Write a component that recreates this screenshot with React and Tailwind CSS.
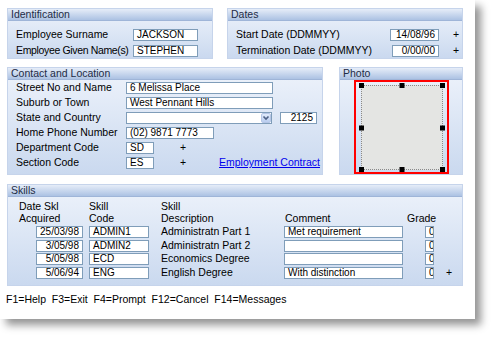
const font = "font-['Liberation_Sans',Arial,sans-serif]";

const Field = ({ className = "", children }) => (
  <div
    className={`h-[12px] shrink-0 overflow-hidden whitespace-nowrap border border-[#7f9db9] bg-white px-[3px] text-[10px] leading-[10px] text-black ${className}`}
  >
    {children}
  </div>
);

const Panel = ({ title, className = "", bodyClassName = "", children }) => (
  <div
    className={`flex flex-col border border-[#c6d4eb] bg-linear-to-b from-[#eef3fb] to-[#cad9ef] ${className}`}
  >
    <div className="h-[12px] shrink-0 border-b border-[#9fb5d8] bg-linear-to-b from-[#e6edf8] to-[#acc2e3] pl-[3px] text-[10.5px] leading-[11px] text-[#1e2c46]">
      {title}
    </div>
    <div className={bodyClassName}>{children}</div>
  </div>
);

const Handle = ({ className }) => (
  <div className={`absolute h-[5px] w-[5px] bg-black ${className}`} />
);

const skills = [
  { date: "25/03/98", code: "ADMIN1", desc: "Administratn Part 1", comment: "Met requirement" },
  { date: "3/05/98", code: "ADMIN2", desc: "Administratn Part 2", comment: "" },
  { date: "5/05/98", code: "ECD", desc: "Economics Degree", comment: "" },
  { date: "5/06/94", code: "ENG", desc: "English Degree", comment: "With distinction" },
];

export default function App() {
  return (
    <div className={`h-[347px] w-[492px] overflow-hidden bg-white text-[10.5px] text-black ${font}`}>
      <div className="h-[319px] w-[475px] bg-white pt-[8px] shadow-[6px_6px_8px_rgba(0,0,0,0.42)]">
        <div className="flex flex-col pl-[7px]">
          {/* top row */}
          <div className="flex gap-[14px]">
            <Panel
              title="Identification"
              className="h-[51px] w-[206px]"
              bodyClassName="flex flex-col gap-[4px] pl-[8px] pt-[8px]"
            >
              <div className="flex h-[12px] items-center">
                <span className="w-[117px]">Employee Surname</span>
                <Field className="w-[65px]">JACKSON</Field>
              </div>
              <div className="flex h-[12px] items-center">
                <span className="w-[117px] whitespace-nowrap tracking-[-0.35px]">Employee Given Name(s)</span>
                <Field className="w-[65px]">STEPHEN</Field>
              </div>
            </Panel>

            <Panel
              title="Dates"
              className="h-[51px] w-[236px]"
              bodyClassName="flex flex-col gap-[4px] pl-[8px] pt-[8px]"
            >
              <div className="flex h-[12px] items-center">
                <span className="w-[154px]">Start Date (DDMMYY)</span>
                <Field className="w-[49px] text-right">14/08/96</Field>
                <span className="ml-[14px]">+</span>
              </div>
              <div className="flex h-[12px] items-center">
                <span className="w-[156px] whitespace-nowrap">Termination Date (DDMMYY)</span>
                <Field className="w-[47px] text-right">0/00/00</Field>
                <span className="ml-[14px]">+</span>
              </div>
            </Panel>
          </div>

          {/* middle row */}
          <div className="mt-[8px] flex gap-[16px]">
            <Panel
              title="Contact and Location"
              className="h-[108px] w-[316px]"
              bodyClassName="flex flex-col gap-[3px] pl-[8px] pt-[2px]"
            >
              <div className="flex h-[12px] items-center">
                <span className="w-[110px]">Street No and Name</span>
                <Field className="w-[147px]">6 Melissa Place</Field>
              </div>
              <div className="flex h-[12px] items-center">
                <span className="w-[110px]">Suburb or Town</span>
                <Field className="w-[147px]">West Pennant Hills</Field>
              </div>
              <div className="flex h-[12px] items-center">
                <span className="w-[110px]">State and Country</span>
                <div className="flex h-[12px] w-[146px] items-center justify-end border border-[#7f9db9] bg-white">
                  <svg width="10" height="10" viewBox="0 0 10 10">
                    <defs>
                      <linearGradient id="dd" x1="0" y1="0" x2="0" y2="1">
                        <stop offset="0" stopColor="#e3ecfb" />
                        <stop offset="1" stopColor="#b7cbef" />
                      </linearGradient>
                    </defs>
                    <rect x="0.5" y="0.5" width="9" height="9" rx="1.5" fill="url(#dd)" stroke="#b5c6e6" />
                    <path d="M2.5 3.5 L5 6 L7.5 3.5" fill="none" stroke="#4d6185" strokeWidth="1.6" />
                  </svg>
                </div>
                <Field className="ml-[8px] w-[37px] text-right">2125</Field>
              </div>
              <div className="flex h-[12px] items-center">
                <span className="w-[110px]">Home Phone Number</span>
                <Field className="w-[88px]">(02) 9871 7773</Field>
              </div>
              <div className="flex h-[12px] items-center">
                <span className="w-[110px]">Department Code</span>
                <Field className="w-[28px]">SD</Field>
                <span className="ml-[26px]">+</span>
              </div>
              <div className="flex h-[12px] items-center">
                <span className="w-[110px]">Section Code</span>
                <Field className="w-[28px]">ES</Field>
                <span className="ml-[26px]">+</span>
                <a className="ml-auto mr-[2px] text-[#0000ee] underline">Employment Contract</a>
              </div>
            </Panel>

            <Panel
              title="Photo"
              className="h-[108px] w-[124px]"
              bodyClassName="flex flex-1 justify-center pl-[1px]"
            >
              <div className="h-full w-[95px] border-2 border-[#ff0000] pb-[2px] pl-[5px] pr-[4px] pt-[3px]">
                <div className="relative h-full w-full border border-dotted border-[#8a8a8a] bg-[#e4e5e3]">
                  <Handle className="left-[-3px] top-[-3px]" />
                  <Handle className="left-1/2 top-[-3px] -translate-x-1/2" />
                  <Handle className="right-[-3px] top-[-3px]" />
                  <Handle className="left-[-3px] top-1/2 -translate-y-1/2" />
                  <Handle className="right-[-3px] top-1/2 -translate-y-1/2" />
                  <Handle className="bottom-[-3px] left-[-3px]" />
                  <Handle className="bottom-[-3px] left-1/2 -translate-x-1/2" />
                  <Handle className="bottom-[-3px] right-[-3px]" />
                </div>
              </div>
            </Panel>
          </div>

          {/* skills */}
          <Panel
            title="Skills"
            className="mt-[9px] h-[102px] w-[456px]"
            bodyClassName="flex flex-col pt-[4px]"
          >
            <div className="flex h-[12px] items-center pl-[11px]">
              <span className="w-[70px]">Date Skl</span>
              <span className="w-[72px]">Skill</span>
              <span>Skill</span>
            </div>
            <div className="flex h-[12px] items-center pl-[11px]">
              <span className="w-[70px]">Acquired</span>
              <span className="w-[72px]">Code</span>
              <span className="w-[124px]">Description</span>
              <span className="w-[122px]">Comment</span>
              <span>Grade</span>
            </div>
            <div className="mt-[1px] flex flex-col">
              {skills.map((s) => (
                <div key={s.code} className="flex h-[13.5px] items-start pl-[28px]">
                  <Field className="h-[11px] w-[47px] text-right leading-[9px]">{s.date}</Field>
                  <Field className="ml-[6px] h-[11px] w-[60px] leading-[9px]">{s.code}</Field>
                  <span className="ml-[12px] w-[123px] whitespace-nowrap leading-[11px]">{s.desc}</span>
                  <Field className="h-[11px] w-[119px] leading-[9px]">{s.comment}</Field>
                  <Field className="ml-[22px] h-[11px] w-[9px] px-[1px] leading-[9px]">0</Field>
                  {s.code === "ENG" && <span className="ml-[12px] leading-[11px]">+</span>}
                </div>
              ))}
            </div>
          </Panel>
        </div>

        <div className="mt-[7px] whitespace-pre pl-[6px] text-[10.5px] leading-[12px]">
          {"F1=Help  F3=Exit  F4=Prompt  F12=Cancel  F14=Messages"}
        </div>
      </div>
    </div>
  );
}
